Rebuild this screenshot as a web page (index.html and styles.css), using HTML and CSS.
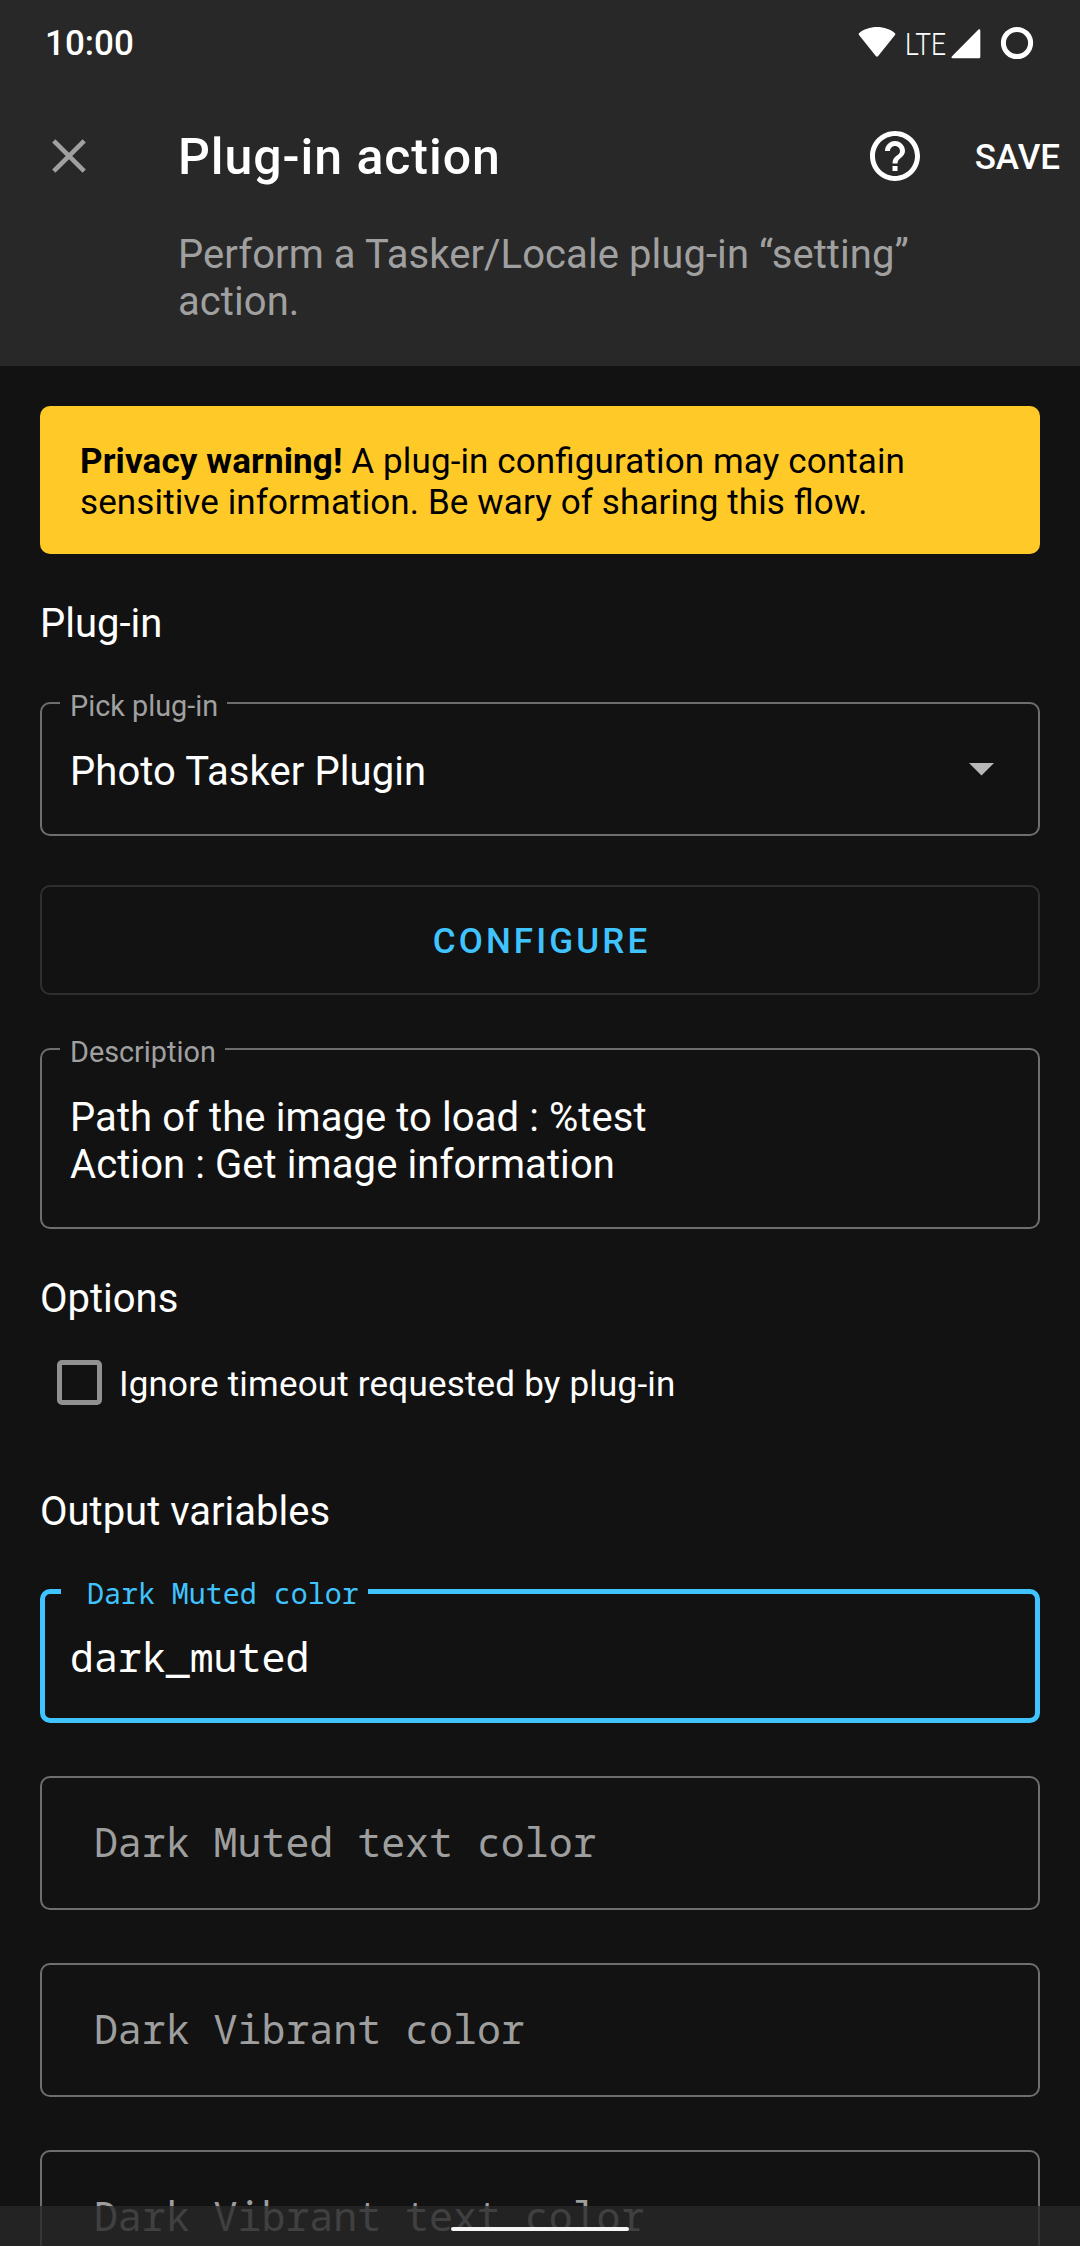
FILE: index.html
```html
<!DOCTYPE html>
<html lang="en">
<head>
<meta charset="utf-8">
<title>Plug-in action</title>
<link rel="stylesheet" href="styles.css">
</head>
<body>
<div class="screen">
  <header class="app-header">
    <div class="status-bar">
      <span class="clock">10:00</span>
      <div class="status-icons">
        <svg class="wifi" width="38" height="32" viewBox="0 0 38 32"><path d="M19 1C12 1 5.500 3.300 1 7.200Q.2 8 1 9L17.800 30Q19 31.300 20.200 30L37 9Q37.800 8 37 7.200C32.500 3.300 26 1 19 1Z" fill="#fff"/></svg>
        <span class="network">LTE</span>
        <svg class="signal" width="30" height="30" viewBox="0 0 30 30"><path d="M27.500 .6Q29.300-.2 29.300 1.800V28Q29.300 29.300 28 29.300H1.800Q-.2 29.300 .8 27.600Z" fill="#fff"/></svg>
        <svg class="battery" width="34" height="34" viewBox="0 0 34 34"><circle cx="17" cy="17" r="13.600" fill="none" stroke="#fff" stroke-width="5"/></svg>
      </div>
    </div>
    <div class="toolbar">
      <svg class="close" width="34" height="34" viewBox="0 0 34 34"><path d="M1.800 1.800L32.200 32.200M32.200 1.800L1.800 32.200" stroke="#a0a0a0" stroke-width="4.600" fill="none"/></svg>
      <h1 class="title">Plug-in action</h1>
      <svg class="help" width="60" height="60" viewBox="0 0 24 24"><path fill="#fff" d="M11 18h2v-2h-2v2zm1-16C6.480 2 2 6.480 2 12s4.480 10 10 10 10-4.480 10-10S17.520 2 12 2zm0 18c-4.410 0-8-3.590-8-8s3.590-8 8-8 8 3.590 8 8-3.590 8-8 8zm0-14c-2.210 0-4 1.790-4 4h2c0-1.100.9-2 2-2s2 .9 2 2c0 2-3 1.750-3 5h2c0-2.250 3-2.500 3-5 0-2.210-1.790-4-4-4z"/></svg>
      <span class="save">SAVE</span>
    </div>
    <p class="subtitle">Perform a Tasker/Locale plug-in “setting” action.</p>
  </header>

  <main class="content">
    <p class="banner"><b>Privacy warning!</b> A plug-in configuration may contain sensitive information. Be wary of sharing this flow.</p>

    <h2 class="section section-plugin">Plug-in</h2>
    <div class="field">
      <span class="label">Pick plug-in</span>
      <span class="value">Photo Tasker Plugin</span>
      <svg class="arrow" width="25" height="13" viewBox="0 0 25 13"><path d="M0 0H25L12.500 12.500Z" fill="#b8b8b8"/></svg>
    </div>

    <div class="button">CONFIGURE</div>

    <div class="field description">
      <span class="label">Description</span>
      <span class="value">Path of the image to load : %test<br>Action : Get image information</span>
    </div>

    <h2 class="section section-options">Options</h2>
    <div class="check-row">
      <span class="checkbox"></span>
      <span class="check-label">Ignore timeout requested by plug-in</span>
    </div>

    <h2 class="section section-output">Output variables</h2>
    <div class="outputs">
      <div class="field mono focused">
        <span class="label"> Dark Muted color</span>
        <span class="value">dark_muted</span>
      </div>
      <div class="field mono"><span class="value placeholder"> Dark Muted text color</span></div>
      <div class="field mono"><span class="value placeholder"> Dark Vibrant color</span></div>
      <div class="field mono"><span class="value placeholder"> Dark Vibrant text color</span></div>
    </div>
  </main>

  <div class="nav-bar"><span class="handle"></span></div>
</div>
</body>
</html>
```
FILE: styles.css
```css
* { box-sizing: border-box; }

body {
  margin: 0;
  background: #121212;
  color: #fff;
  font-family: Roboto, "Liberation Sans", sans-serif;
}

h1, h2, p { margin: 0; font-weight: 400; }
svg { display: block; flex: none; }

.screen {
  position: relative;
  width: 1080px;
  height: 2246px;
  overflow: hidden;
}

.app-header { height: 366px; background: #282828; }

.status-bar {
  display: flex;
  justify-content: space-between;
  height: 86px;
  padding: 0 46px 0 45px;
}
.clock { margin-top: 23px; font-size: 35px; line-height: 41px; font-weight: 500; }
.status-icons { display: flex; align-items: flex-start; padding-top: 26px; }
.network {
  width: 42px;
  margin: 1px 4px 0 9px;
  font-size: 31px;
  line-height: 35px;
  font-weight: 300;
  transform: scaleX(0.85);
  transform-origin: 0 0;
}
.signal { margin: 3px 19px 0 0; }

.toolbar {
  display: flex;
  align-items: center;
  height: 139px;
  padding: 0 20px 0 52px;
}
.toolbar .close { margin-right: 92px; }
.title {
  flex: 1;
  font-size: 50px;
  line-height: 59px;
  font-weight: 500;
  letter-spacing: 0.95px;
  padding-top: 4px;
}
.help { margin-right: 50px; }
.save { font-size: 35px; line-height: 41px; font-weight: 500; padding-top: 3px; }

.subtitle {
  width: 800px;
  margin: 6px 0 0 178px;
  font-size: 40px;
  line-height: 47px;
  color: #a0a0a0;
  letter-spacing: 0.07px;
}

.content { padding: 40px 40px 0; }

.banner {
  height: 148px;
  padding: 35px 40px;
  border-radius: 10px;
  background: #ffca28;
  color: #000;
  font-size: 35px;
  line-height: 41px;
  letter-spacing: 0.12px;
  font-feature-settings: "liga" 1;
}

.section { font-size: 40px; line-height: 47px; }
.section-plugin { margin-top: 46px; margin-bottom: 55px; }
.section-options { margin-top: 46px; margin-bottom: 38px; }
.section-output { margin-top: 83px; margin-bottom: 54px; }

.field {
  position: relative;
  display: flex;
  justify-content: space-between;
  height: 134px;
  padding: 44px 44px 0 28px;
  border: 2px solid #6e6e6e;
  border-radius: 10px;
}
.label {
  position: absolute;
  top: -15px;
  left: 18px;
  padding: 0 9px 0 10px;
  background: #121212;
  color: #a0a0a0;
  font-size: 28.8px;
  line-height: 35px;
  white-space: pre;
}
.value { font-size: 40px; line-height: 47px; letter-spacing: 0.08px; }
.arrow { margin-top: 15px; }

.button {
  height: 110px;
  margin: 49px 0 53px;
  padding: 1px 0 0 3px;
  border: 2px solid #2f2f2f;
  border-radius: 10px;
  color: #40c4ff;
  font-size: 35px;
  line-height: 108px;
  font-weight: 500;
  letter-spacing: 3.125px;
  text-align: center;
}

.description { height: 181px; }

.check-row { display: flex; align-items: center; height: 45px; padding-left: 17px; }
.checkbox {
  width: 45px;
  height: 45px;
  margin-right: 17px;
  border: 5px solid #919191;
  border-radius: 5px;
}
.check-label { font-size: 35px; line-height: 41px; letter-spacing: 0.2px; padding-top: 3px; }

.outputs { display: flex; flex-direction: column; gap: 53px; }
.mono { padding-top: 40px; font-family: "Droid Sans Mono", "Noto Sans Mono", "DejaVu Sans Mono", monospace; }
.mono .value { font-size: 39.9px; letter-spacing: 0; white-space: pre; }
.mono .placeholder { color: #9e9e9e; }
.focused { border: 5px solid #40c4ff; padding: 39px 25px 0; }
.focused .label { top: -18px; left: 16px; padding-left: 9px; color: #40c4ff; font-size: 28.3px; }

.nav-bar {
  position: absolute;
  left: 0;
  bottom: 0;
  width: 100%;
  height: 40px;
  padding-top: 21px;
  background: rgba(40, 40, 40, 0.8);
}
.handle {
  display: block;
  width: 178px;
  height: 4px;
  margin: 0 auto;
  border-radius: 2px;
  background: #f5f5f5;
}
```
